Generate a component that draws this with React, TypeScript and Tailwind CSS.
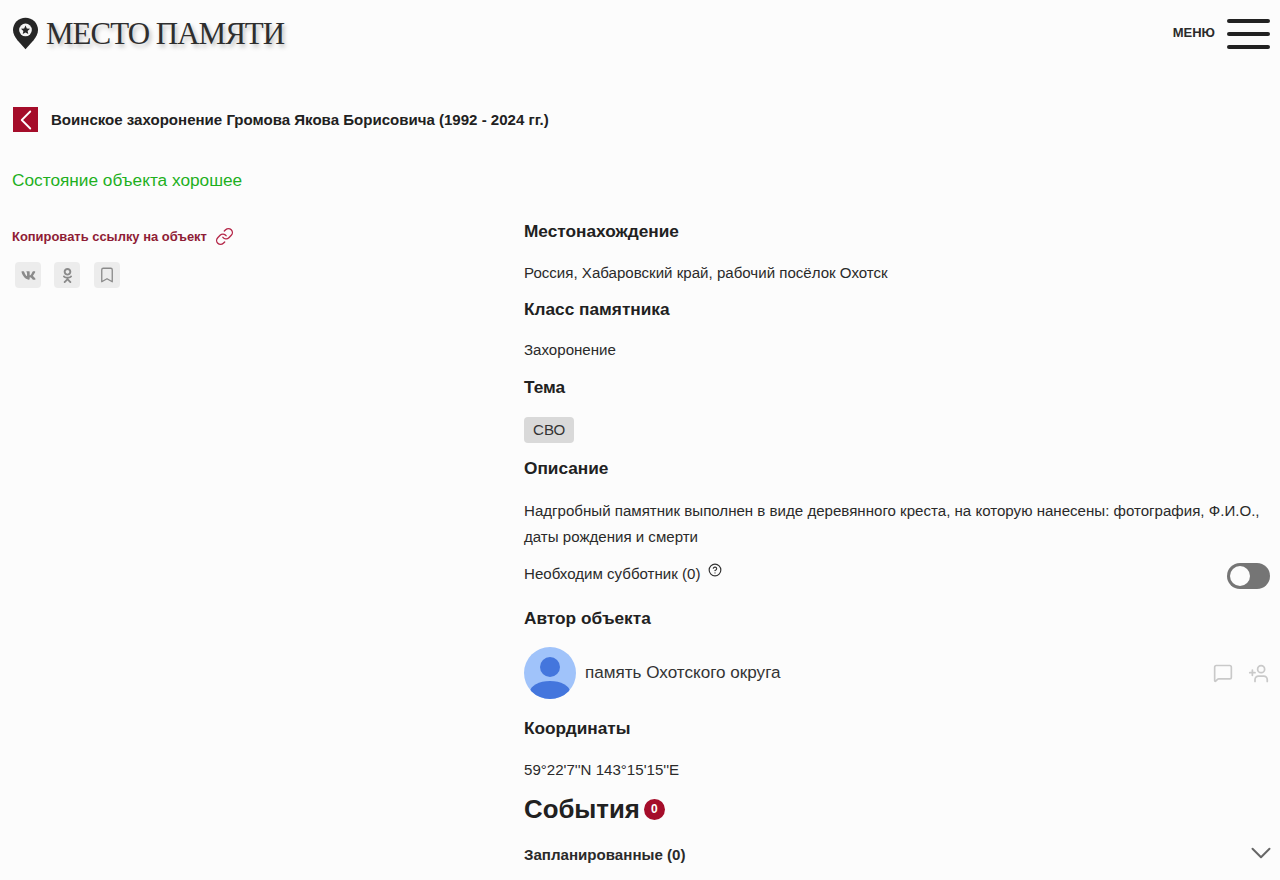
import { Bookmark, ChevronDown, ChevronLeft, CircleHelp, Link, MessageSquare, UserPlus } from 'lucide-react';
import { FaOdnoklassniki, FaVk } from 'react-icons/fa';

function Heading({ children, className = '' }: { children: React.ReactNode; className?: string }) {
  return <h3 className={`text-[17.25px] leading-[24px] font-bold text-[#212121] ${className}`}>{children}</h3>;
}

function Pin() {
  return (
    <svg width="25" height="33" viewBox="0 0 26 33" className="ml-px shrink-0">
      <path
        fill="#262626"
        d="M13 0C5.800 0 0 5.600 0 12.600c0 4.200 2 7.600 4.600 10.800L13 33l8.400-9.600C24 20.200 26 16.800 26 12.600 26 5.600 20.200 0 13 0Z"
      />
      <circle cx="13" cy="12.800" r="6.600" fill="#f4f4f4" />
      <path fill="#262626" d="m13 8.200 1.400 3 3.300.4-2.500 2.200.7 3.200-2.900-1.600-2.900 1.600.7-3.200-2.500-2.200 3.300-.4Z" />
    </svg>
  );
}

function ShareButton({ children }: { children: React.ReactNode }) {
  return <div className="flex size-[26px] items-center justify-center rounded bg-[#ececec] text-[#8a8a8a]">{children}</div>;
}

export default function App() {
  return (
    <div className="h-[880px] overflow-hidden bg-[#fcfcfc] font-['Liberation_Sans',Arial,sans-serif] text-[#2a2a2a]">
      <header className="flex h-[66px] items-center justify-between pr-[10px] pl-3">
        <div className="flex items-center gap-2">
          <Pin />
          <span className="font-['Liberation_Serif',serif] text-[31px] leading-none tracking-[-1px] text-[#2e2e2e] [text-shadow:2px_3px_4px_rgba(0,0,0,0.25)]">
            МЕСТО ПАМЯТИ
          </span>
        </div>
        <div className="flex items-center gap-3">
          <span className="text-[13px] font-bold text-[#2b2b2b]">МЕНЮ</span>
          <div className="mt-[2px] flex w-[43px] flex-col gap-[9px]">
            <div className="h-1 rounded-full bg-[#222]" />
            <div className="h-1 rounded-full bg-[#222]" />
            <div className="h-1 rounded-full bg-[#222]" />
          </div>
        </div>
      </header>

      <div className="mt-[41px] flex h-[26px] items-center gap-[13px] pl-[13px]">
        <div className="flex size-[25px] items-center justify-center self-start overflow-hidden bg-[#a50d2a] text-white">
          <ChevronLeft className="shrink-0" size={34} strokeWidth={1.3} />
        </div>
        <h1 className="text-[15.06px] font-bold text-[#212121]">Воинское захоронение Громова Якова Борисовича (1992 - 2024 гг.)</h1>
      </div>

      <p className="mt-[34px] pl-3 text-[17.25px] leading-[26px] text-[#1eb01e]">Состояние объекта хорошее</p>

      <div className="mt-[27px] flex">
        <div className="w-[524px] shrink-0 pl-3">
          <div className="mt-[7px] flex items-center gap-2">
            <span className="text-[12.95px] font-bold text-[#8f1d36]">Копировать ссылку на объект</span>
            <Link size={19} className="text-[#b5294a]" strokeWidth={1.75} />
          </div>
          <div className="mt-[16px] ml-[3px] flex gap-[13px]">
            <ShareButton>
              <FaVk size={15} />
            </ShareButton>
            <ShareButton>
              <FaOdnoklassniki size={15} />
            </ShareButton>
            <div className="ml-px">
              <ShareButton>
                <Bookmark size={18} strokeWidth={1.75} />
              </ShareButton>
            </div>
          </div>
        </div>

        <div className="w-[746px] text-[15.08px] leading-[26px]">
          <Heading className="-mt-px">Местонахождение</Heading>
          <p className="mt-[17px]">Россия, Хабаровский край, рабочий посёлок Охотск</p>
          <Heading className="mt-[11px]">Класс памятника</Heading>
          <p className="mt-[16px]">Захоронение</p>
          <Heading className="mt-[12px]">Тема</Heading>
          <span className="mt-[18px] inline-block rounded bg-[#d9d9d9] px-[9px] text-[#333]">СВО</span>
          <Heading className="mt-[13px]">Описание</Heading>
          <p className="mt-[18px]">
            Надгробный памятник выполнен в виде деревянного креста, на которую нанесены: фотография, Ф.И.О.,
            <br />
            даты рождения и смерти
          </p>
          <div className="mt-[11px] flex items-start justify-between">
            <div className="flex items-start gap-2">
              <span>Необходим субботник (0)</span>
              <CircleHelp size={14} className="mt-[2px] text-[#333]" />
            </div>
            <div className="mt-[2px] flex h-[26px] w-[43px] items-center rounded-full bg-[#757575] pl-[3px]">
              <div className="size-5 rounded-full bg-[#fcfcfc]" />
            </div>
          </div>
          <Heading className="mt-[17px]">Автор объекта</Heading>
          <div className="mt-[17px] flex items-center justify-between">
            <div className="flex items-center gap-[9px]">
              <svg width="52" height="52" viewBox="0 0 52 52" className="shrink-0">
                <defs>
                  <clipPath id="avatar">
                    <circle cx="26" cy="26" r="26" />
                  </clipPath>
                </defs>
                <circle cx="26" cy="26" r="26" fill="#a0c3fa" />
                <g clipPath="url(#avatar)" fill="#4476dd">
                  <circle cx="26" cy="20" r="10" />
                  <ellipse cx="26" cy="45" rx="20" ry="11" />
                </g>
              </svg>
              <span className="text-[17.1px] text-[#333]">память Охотского округа</span>
            </div>
            <div className="mr-[1px] flex items-center gap-[15px] text-[#c9c9c9]">
              <MessageSquare size={20} strokeWidth={2} />
              <UserPlus size={21} strokeWidth={2} className="-scale-x-100" />
            </div>
          </div>
          <Heading className="mt-[17px]">Координаты</Heading>
          <p className="mt-[17px]">59°22'7''N 143°15'15''E</p>
          <div className="mt-[10px] flex items-center gap-[4px]">
            <h2 className="text-[25.8px] leading-[32px] font-bold text-[#212121]">События</h2>
            <span className="flex size-[21px] items-center justify-center rounded-full bg-[#a50d2a] text-[12px] font-bold text-white">0</span>
          </div>
          <div className="mt-[17px] flex h-[26px] items-center justify-between">
            <span className="text-[15.1px] font-bold">Запланированные (0)</span>
            <ChevronDown size={34} strokeWidth={1.4} className="-mt-1 -mr-[8px] text-[#666]" />
          </div>
        </div>
      </div>
    </div>
  );
}
